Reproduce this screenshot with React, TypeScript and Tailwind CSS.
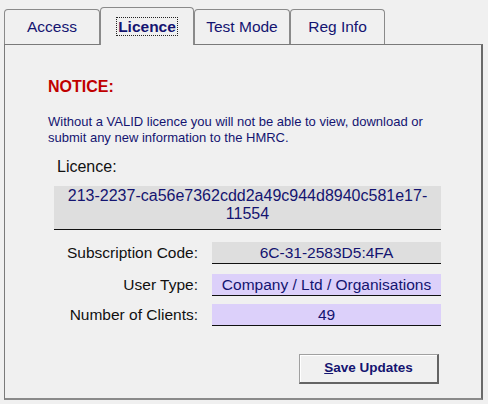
import React from "react";

const font = { fontFamily: '"Liberation Sans", Arial, sans-serif' };

function Tab({ label, w, selected }: { label: string; w: string; selected?: boolean }) {
  if (selected) {
    return (
      <div
        className={`${w} relative z-10 -mb-px flex h-[38px] items-start justify-center rounded-t-[4px] border-x border-t border-[#8a8a8a] bg-[#f0f0f0] pt-[9px]`}
      >
        <span className="border border-dotted border-[#222] px-[1px] text-[15.5px] font-bold leading-[17px] text-[#141470]">
          {label}
        </span>
      </div>
    );
  }
  return (
    <div
      className={`${w} flex h-[35px] items-start justify-center rounded-t-[4px] border-x border-t border-[#8a8a8a] bg-[#f0f0f0] pt-[8px] text-[15.5px] leading-[18px] text-[#141470]`}
    >
      {label}
    </div>
  );
}

function Row({ label, value, purple, mt }: { label: string; value: string; purple?: boolean; mt: string }) {
  return (
    <div className={`${mt} flex items-center`}>
      <div className="w-[144px] text-right text-[15.5px] leading-[18px] text-[#111]">{label}</div>
      <div
        className={`ml-[14px] flex h-[22px] w-[229px] items-center justify-center border-b border-[#111] text-[15.5px] leading-[18px] text-[#141470] ${
          purple ? "bg-[#dcd0fa]" : "bg-[#dedede]"
        }`}
      >
        {value}
      </div>
    </div>
  );
}

export default function App() {
  return (
    <div className="h-[404px] w-[488px] bg-[#f0f0f0]" style={font}>
      <div className="flex h-[44px] items-end pl-[4px]">
        <Tab label="Access" w="w-[96px]" />
        <Tab label="Licence" w="w-[94px]" selected />
        <Tab label="Test Mode" w="w-[96px]" />
        <Tab label="Reg Info" w="w-[95px]" />
      </div>
      <div className="ml-[4px] h-[356px] w-[479px] border-l border-t border-[#7a7a7a] border-r-2 border-b-2 border-r-[#6a6a6a] border-b-[#8a8a8a]">
        <div className="ml-[43px] mt-[33px] text-[16px] font-bold leading-[18px] text-[#c00000]">NOTICE:</div>
        <div className="ml-[43px] mt-[18px] text-[13px] leading-[16px] text-[#141470]">
          Without a VALID licence you will not be able to view, download or
          <br />
          submit any new information to the HMRC.
        </div>
        <div className="ml-[52px] mt-[12px] text-[16px] leading-[18px] text-[#111]">Licence:</div>
        <div className="ml-[49px] mt-[10px] w-[387px]">
          <div className="h-[44px] border-b border-[#111] bg-[#dedede] pt-[1px] text-center text-[16px] leading-[18px] text-[#141470]">
            213-2237-ca56e7362cdd2a49c944d8940c581e17-
            <br />
            11554
          </div>
          <Row label="Subscription Code:" value="6C-31-2583D5:4FA" mt="mt-[12px]" />
          <Row label="User Type:" value="Company / Ltd / Organisations" purple mt="mt-[10px]" />
          <Row label="Number of Clients:" value="49" purple mt="mt-[8px]" />
          <div className="mt-[28px] flex justify-end pr-[2px]">
            <button className="flex h-[30px] w-[140px] items-center justify-center border-l border-t border-[#a0a0a0] border-b-2 border-r-2 border-b-[#646464] border-r-[#646464] bg-[#f0f0f0] text-[13.5px] font-bold text-[#141470] shadow-[inset_1px_1px_0_#ffffff]">
              <span>
                <span className="underline">S</span>ave Updates
              </span>
            </button>
          </div>
        </div>
      </div>
    </div>
  );
}
